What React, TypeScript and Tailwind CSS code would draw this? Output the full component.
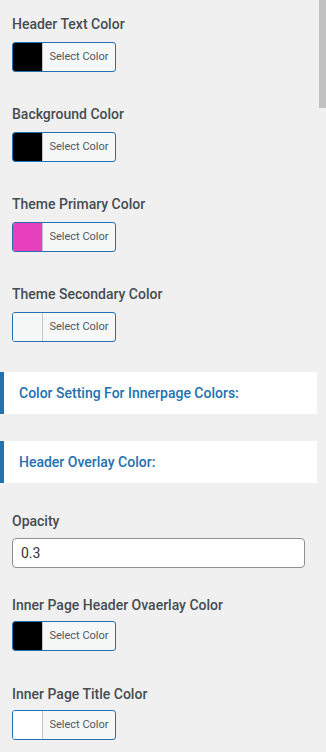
const font = { fontFamily: 'Roboto, "Liberation Sans", sans-serif' };

type SwatchProps = { label: string; swatch: string; tight?: boolean };

function ColorField({ label, swatch, tight }: SwatchProps) {
  return (
    <div className="flex flex-col">
      <label className="h-5 text-[14px] leading-5 font-medium text-[#464c52]">
        {label}
      </label>
      <button
        className={`flex h-[30px] w-[104px] overflow-hidden rounded-[3px] border border-[#2271b1] bg-[#f6f7f7] ${
          tight ? 'mt-[6px]' : 'mt-2'
        }`}
      >
        <span className={`h-full w-[30px] border-r border-[#c3c4c7] ${swatch}`} />
        <span className="flex h-full flex-1 items-center justify-center text-[11px] text-[#50575e]">
          Select Color
        </span>
      </button>
    </div>
  );
}

function SectionHeading({ title }: { title: string }) {
  return (
    <div className="mr-[9px] flex h-[42px] items-center border-l-4 border-[#2271b1] bg-white pl-[15px]">
      <h3 className="text-[14px] font-medium text-[#2271b1]">{title}</h3>
    </div>
  );
}

export default function App() {
  return (
    <div
      className="relative min-h-[752px] w-[326px] overflow-hidden bg-[#f0f0f1] pt-[14px]"
      style={font}
    >
      <div className="flex flex-col gap-8 pl-3">
        <ColorField label="Header Text Color" swatch="bg-black" />
        <ColorField label="Background Color" swatch="bg-black" />
        <ColorField label="Theme Primary Color" swatch="bg-[#e640bd]" />
        <ColorField label="Theme Secondary Color" swatch="bg-[#f6f7f7]" />
      </div>

      <div className="mt-[30px] flex flex-col gap-[27px]">
        <SectionHeading title="Color Setting For Innerpage Colors:" />
        <SectionHeading title="Header Overlay Color:" />
      </div>

      <div className="mt-7 flex flex-col pl-3">
        <label className="h-5 text-[14px] leading-5 font-medium text-[#464c52]">
          Opacity
        </label>
        <input
          defaultValue="0.3"
          className="mt-[7px] h-[30px] w-[293px] rounded-[4px] border border-[#8c8f94] bg-white px-2 text-[14px] text-[#2c3338] outline-none"
        />
      </div>

      <div className="mt-[27px] flex flex-col gap-[33px] pl-3">
        <ColorField label="Inner Page Header Ovaerlay Color" swatch="bg-black" tight />
        <ColorField label="Inner Page Title Color" swatch="bg-white" tight />
      </div>

      <div className="absolute top-0 right-0 h-[108px] w-[7px] bg-[#c1c1c1]" />
    </div>
  );
}
